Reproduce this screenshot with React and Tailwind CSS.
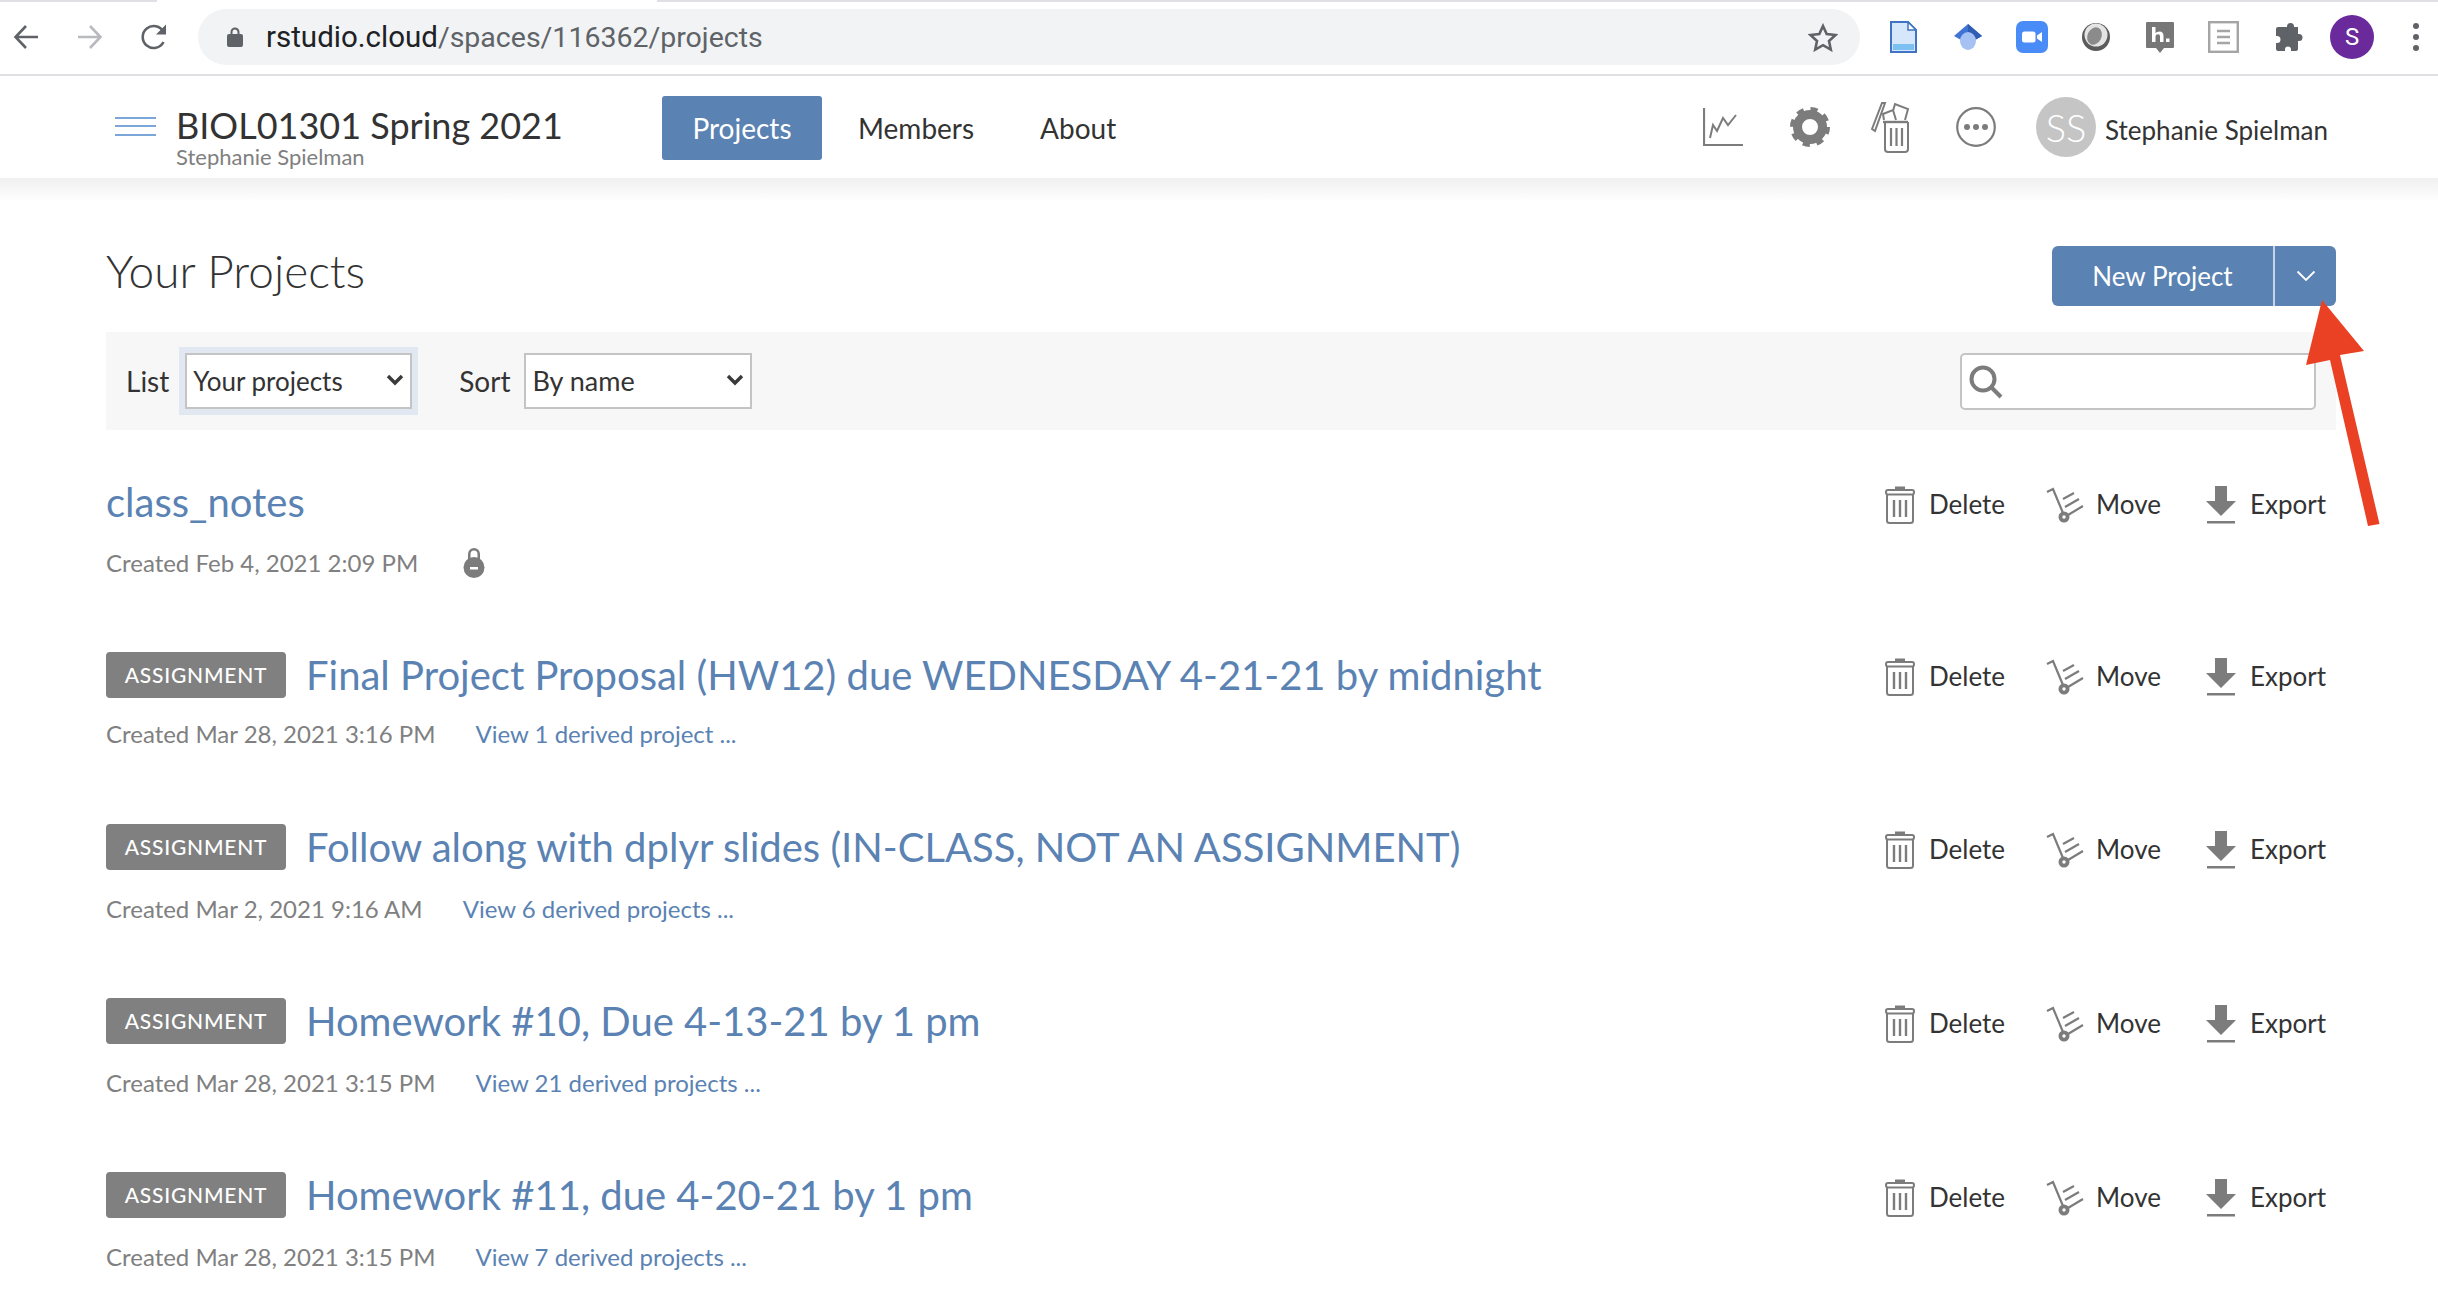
import { Fragment } from "react";

const rows = [
  { title: "class_notes", created: "Created Feb 4, 2021 2:09 PM", locked: true, height: "h-[173px]", actions: "mt-[5px]", meta: "mt-0" },
  { title: "Final Project Proposal (HW12) due WEDNESDAY 4-21-21 by midnight", created: "Created Mar 28, 2021 3:16 PM", derived: "View 1 derived project ...", height: "h-[172px]", actions: "mt-[3px]", meta: "-mt-[2px]" },
  { title: "Follow along with dplyr slides (IN-CLASS, NOT AN ASSIGNMENT)", created: "Created Mar 2, 2021 9:16 AM", derived: "View 6 derived projects ...", height: "h-[174px]", actions: "mt-[5px]", meta: "mt-[1px]" },
  { title: "Homework #10, Due 4-13-21 by 1 pm", created: "Created Mar 28, 2021 3:15 PM", derived: "View 21 derived projects ...", height: "h-[174px]", actions: "mt-[5px]", meta: "mt-[1px]" },
  { title: "Homework #11, due 4-20-21 by 1 pm", created: "Created Mar 28, 2021 3:15 PM", derived: "View 7 derived projects ...", height: "h-[174px]", actions: "mt-[5px]", meta: "mt-[1px]" },
];

const TrashIcon = () => (
  <svg width="30" height="38" viewBox="0 0 30 38" fill="none" stroke="#7c7c7c" strokeWidth="2">
    <path d="M11 3.5V1.5h8v2" fill="#7c7c7c" />
    <rect x="1" y="4" width="28" height="4.5" rx="2" />
    <path d="M2 8v26.5a2.5 2.5 0 0 0 2.5 2.5h21a2.5 2.5 0 0 0 2.5-2.5V8" />
    <path d="M9 14v17M15 14v17M21 14v17" strokeWidth="2.4" />
  </svg>
);

const CartIcon = () => (
  <svg width="38" height="38" viewBox="0 0 38 38" fill="none" stroke="#7c7c7c" strokeWidth="2.2">
    <path d="M1 6l6-3 10 24" />
    <circle cx="18" cy="31" r="5.5" fill="#7c7c7c" stroke="none" />
    <circle cx="18" cy="31" r="1.7" fill="#fff" stroke="none" />
    <path d="M22 29l15-9M19 21l14-8M17 13l11-6" />
  </svg>
);

const ExportIcon = () => (
  <svg width="30" height="38" viewBox="0 0 30 38" fill="#7c7c7c">
    <path d="M9 0h12v15h9L15 30 0 15h9z" />
    <rect x="1" y="35" width="28" height="2.5" />
  </svg>
);

const ChevronIcon = () => (
  <svg width="18" height="12" viewBox="0 0 18 12" fill="none" stroke="#3a3a3a" strokeWidth="3.4">
    <path d="M2 2l7 7 7-7" />
  </svg>
);

const Select = ({ value, className, textClass }) => (
  <div className={`relative h-[56px] ${className}`}>
    <select
      defaultValue={value}
      className={`w-full h-full appearance-none bg-white border-2 border-[#c4c4c4] pl-[6px] text-[#333] outline-none rounded-none ${textClass}`}
    >
      <option>{value}</option>
    </select>
    <div className="absolute right-[8px] top-[21px] pointer-events-none flex">
      <ChevronIcon />
    </div>
  </div>
);

const Action = ({ icon, label, className }) => (
  <div className={`flex items-center ${className}`}>
    {icon}
    <span className="text-[26px] text-[#333]">{label}</span>
  </div>
);

const BrowserBar = () => (
  <div className="h-[76px] bg-white relative border-b-2 border-[#dfe0e4] font-['Roboto',sans-serif]">
    <div className="absolute top-0 left-0 w-[157px] h-[2px] bg-[#dfe0e4]" />
    <div className="absolute top-0 left-[657px] right-0 h-[2px] bg-[#dfe0e4]" />
    <div className="h-full flex items-center">
      <svg className="ml-[13px]" width="26" height="26" viewBox="0 0 26 26" fill="none" stroke="#5f6368" strokeWidth="2.6">
        <path d="M25 13H3M13 2L2.5 13 13 24" />
      </svg>
      <svg className="ml-[38px]" width="26" height="26" viewBox="0 0 26 26" fill="none" stroke="#b8babd" strokeWidth="2.6">
        <path d="M1 13h22M13 2l10.5 11L13 24" />
      </svg>
      <svg className="ml-[37px]" width="28" height="28" viewBox="0 0 28 28" fill="none" stroke="#5f6368" strokeWidth="2.6">
        <path d="M23.5 19a11 11 0 1 1 0-10" />
        <path d="M26 1.5v10H16z" fill="#5f6368" stroke="none" />
      </svg>
      <div className="ml-[30px] w-[1662px] h-[56px] rounded-full bg-[#f1f3f4] flex items-center">
        <svg className="ml-[28px]" width="18" height="22" viewBox="0 0 18 22" fill="#5f6368">
          <path d="M4.5 8V6a4.5 4.5 0 0 1 9 0v2h-2V6a2.5 2.5 0 0 0-5 0v2z" />
          <rect x="1" y="8" width="16" height="13" rx="2" />
        </svg>
        <div className="ml-[22px] mt-[2px] text-[28.5px] leading-none text-[#5f6368] flex-1">
          <span className="text-[#202124] text-[29.5px]">rstudio.cloud</span>/spaces/116362/projects
        </div>
        <svg className="mr-[22px]" width="30" height="29" viewBox="0 0 30 29" fill="none" stroke="#5f6368" strokeWidth="2.6">
          <path d="M15 3l3.7 8 8.8 1-6.5 6 1.8 8.6L15 22.2l-7.8 4.4L9 18l-6.5-6 8.8-1z" />
        </svg>
      </div>
      <div className="ml-[30px] flex items-center">
        <svg width="27" height="32" viewBox="0 0 27 32">
          <path d="M1 1h17l8 8v22H1z" fill="#d6e6fb" stroke="#3f74c4" strokeWidth="2" />
          <path d="M18 1v8h8z" fill="#fff" stroke="#3f74c4" strokeWidth="1.5" />
          <rect x="3" y="23" width="21" height="6" fill="#7cc0f2" />
        </svg>
        <svg className="ml-[37px]" width="28" height="26" viewBox="0 0 28 26">
          <path d="M14 0l14 12-14 8L0 12z" fill="#3f74d4" />
          <path d="M14 0l14 12-14 8z" fill="#2f5db4" />
          <ellipse cx="14" cy="17" rx="8" ry="9" fill="#a6c2f4" />
        </svg>
        <svg className="ml-[34px]" width="32" height="32" viewBox="0 0 32 32">
          <rect width="32" height="32" rx="7" fill="#4a8cf7" />
          <rect x="6" y="10.5" width="13.5" height="11" rx="2.5" fill="#fff" />
          <path d="M21 14.5l5-3.5v10l-5-3.5z" fill="#fff" />
        </svg>
        <svg className="ml-[34px]" width="28" height="28" viewBox="0 0 28 28">
          <circle cx="14" cy="14" r="14" fill="#5b5b5b" />
          <circle cx="14" cy="12" r="11.500" fill="#e4e4e4" />
          <ellipse cx="12.500" cy="13" rx="7" ry="9" fill="#8b8b8b" transform="rotate(25 12.500 13)" />
        </svg>
        <svg className="ml-[36px]" width="28" height="31" viewBox="0 0 28 31">
          <path d="M1 0h26a1 1 0 0 1 1 1v24a1 1 0 0 1-1 1h-9l-4 5-4-5H1a1 1 0 0 1-1-1V1a1 1 0 0 1 1-1z" fill="#777" />
          <path d="M6 5h3.5v6q1.5-1.5 4-1.5 4 0 4 4.5v6H14v-6q0-1.8-2-1.8-2.5 0-2.5 2.4V20H6zM20 16.5h3.5V20H20z" fill="#fff" />
        </svg>
        <svg className="ml-[34px]" width="31" height="32" viewBox="0 0 31 32" fill="none">
          <rect x="1.2" y="1.2" width="28.6" height="29.6" fill="#fff" stroke="#a5a5a5" strokeWidth="2.4" />
          <path d="M9 10h13M9 16h13M9 22h13" stroke="#a5a5a5" strokeWidth="2.6" />
        </svg>
        <svg className="ml-[35px]" width="29" height="28" viewBox="0 0 29 28" fill="#5f6368">
          <path d="M10 4h3V3.5a3.5 3.5 0 0 1 7 0V4h4v7h1a3.5 3.5 0 0 1 0 7h-1v8a2 2 0 0 1-2 2h-5v-1.5a3 3 0 0 0-6 0V28H4a2 2 0 0 1-2-2v-6h1a3.5 3.5 0 0 0 0-7H2V6a2 2 0 0 1 2-2z" />
        </svg>
        <div className="ml-[27px] w-[44px] h-[44px] rounded-full bg-[#6b2a9b] text-white text-[24px] flex items-center justify-center">S</div>
        <div className="ml-[39px] flex flex-col gap-[5px]">
          <div className="w-[6px] h-[6px] rounded-full bg-[#5f6368]" />
          <div className="w-[6px] h-[6px] rounded-full bg-[#5f6368]" />
          <div className="w-[6px] h-[6px] rounded-full bg-[#5f6368]" />
        </div>
      </div>
    </div>
  </div>
);

const AppHeader = () => (
  <div className="h-[102px] bg-white flex items-center relative">
    <div className="ml-[115px] w-[41px] flex flex-col gap-[6.5px] mb-[2px]">
      <div className="h-[2px] bg-[#7ba6d8]" />
      <div className="h-[2px] bg-[#7ba6d8]" />
      <div className="h-[2px] bg-[#7ba6d8]" />
    </div>
    <div className="ml-[20px] w-[486px]">
      <div className="text-[36px] leading-[40px] text-[#333] mt-[20px]">BIOL01301 Spring 2021</div>
      <div className="text-[22px] leading-[24px] text-[#808080]">Stephanie Spielman</div>
    </div>
    <div className="w-[160px] h-[64px] rounded-[3px] bg-[#5a82b3] text-white text-[28px] flex items-center justify-center mt-[2px]">Projects</div>
    <div className="ml-[36px] text-[28px] text-[#333] mt-[1px]">Members</div>
    <div className="ml-[66px] text-[28px] text-[#333] mt-[1px]">About</div>
    <div className="ml-auto flex items-center">
      <svg width="40" height="38" viewBox="0 0 40 38" fill="none" stroke="#7c7c7c">
        <path d="M1 0v37h39" strokeWidth="2.2" />
        <path d="M7 30l3-13 4 6 6-13 5 7 8-10" strokeWidth="2" />
      </svg>
      <svg className="ml-[47px]" width="40" height="40" viewBox="0 0 40 40" fill="none" stroke="#7c7c7c">
        <circle cx="20" cy="20" r="12.5" strokeWidth="9" />
        <circle cx="20" cy="20" r="17.5" strokeWidth="5" strokeDasharray="7 6.74" />
      </svg>
      <svg className="ml-[41px]" width="39" height="51" viewBox="0 0 39 51" fill="none" stroke="#7c7c7c" strokeWidth="2">
        <path d="M1 27L11 1h3L4 29z" />
        <path d="M13 18l-1-6 10-4 3 10M22 9l2-7 13 5-3 11" />
        <path d="M12 20h25" strokeWidth="2.4" />
        <path d="M14 20v27a3 3 0 0 0 3 3h17a3 3 0 0 0 3-3V20" />
        <path d="M20 26v18M25.500 26v18M31 26v18" strokeWidth="2.2" />
      </svg>
      <svg className="ml-[46px]" width="40" height="40" viewBox="0 0 40 40" fill="#7c7c7c">
        <circle cx="20" cy="20" r="18.8" fill="none" stroke="#7c7c7c" strokeWidth="2.2" />
        <circle cx="11" cy="20" r="3" />
        <circle cx="20" cy="20" r="3" />
        <circle cx="29" cy="20" r="3" />
      </svg>
      <div className="ml-[40px] w-[60px] h-[60px] rounded-full bg-[#c5c5c5] text-white text-[38px] font-light flex items-center justify-center">SS</div>
      <div className="ml-[9px] mr-[110px] text-[26px] text-[#333] mt-[6px]">Stephanie Spielman</div>
    </div>
  </div>
);

const ProjectRow = ({ row }) => (
  <div className={row.height}>
    <div className="h-[60px] flex items-center">
      {!row.locked && (
        <div className="w-[180px] h-[46px] mr-[20px] mb-[1px] rounded-[4px] bg-[#808080] text-white text-[21px] font-medium tracking-[0.8px] flex items-center justify-center">ASSIGNMENT</div>
      )}
      <div className="text-[40px] text-[#5a82b3] whitespace-nowrap">{row.title}</div>
      <div className={`ml-auto flex items-center pr-[10px] ${row.actions}`}>
        <Action icon={<TrashIcon />} label="Delete" className="gap-[14px]" />
        <Action icon={<CartIcon />} label="Move" className="gap-[12px] ml-[41px]" />
        <Action icon={<ExportIcon />} label="Export" className="gap-[14px] ml-[45px]" />
      </div>
    </div>
    <div className={`h-[62px] flex items-center text-[24px] text-[#808080] ${row.meta}`}>
      <span>{row.created}</span>
      {row.locked && (
        <svg className="ml-[45px]" width="22" height="32" viewBox="0 0 22 32" fill="#7c7c7c">
          <path d="M5 14V7a6 6 0 0 1 12 0v7h-2.500V7a3.500 3.500 0 0 0-7 0v7z" />
          <circle cx="11" cy="20.500" r="10.500" />
          <rect x="7" y="20" width="8" height="2.500" fill="#fff" />
        </svg>
      )}
      {row.derived && <span className="ml-[40px] text-[#5a82b3]">{row.derived}</span>}
    </div>
  </div>
);

export default function App() {
  return (
    <div className="relative w-[2438px] h-[1304px] overflow-hidden bg-white font-['Lato',sans-serif]">
      <BrowserBar />
      <AppHeader />
      <div className="h-[24px] -mb-[24px] bg-gradient-to-b from-[#f0f0f0] to-white" />
      <div className="pl-[106px] pr-[102px] pt-[68px]">
        <div className="flex justify-between items-start h-[60px]">
          <div className="text-[46px] leading-[56px] font-light text-[#333] -mt-[3px]">Your Projects</div>
          <div className="flex h-[60px] rounded-[6px] overflow-hidden bg-[#5a82b3] text-white">
            <div className="w-[221px] text-[26px] flex items-center justify-center">New Project</div>
            <div className="w-[63px] border-l-2 border-[#c5d3e5] flex items-center justify-center">
              <svg width="20" height="12" viewBox="0 0 20 12" fill="none" stroke="#fff" strokeWidth="1.8">
                <path d="M1.500 1.500L10 10l8.500-8.500" />
              </svg>
            </div>
          </div>
        </div>
        <div className="mt-[26px] h-[98px] bg-[#f7f7f7] flex items-center text-[#333] text-[28px]">
          <span className="ml-[20px]">List</span>
          <div className="ml-[10px] p-[6px] bg-[#e2e8f2]">
            <Select value="Your projects" className="w-[227px]" textClass="text-[26px]" />
          </div>
          <span className="ml-[41px]">Sort</span>
          <Select value="By name" className="ml-[14px] w-[228px]" textClass="text-[27px]" />
          <div className="ml-auto mr-[20px] relative w-[356px] h-[57px]">
            <input className="w-full h-full bg-white border-2 border-[#c4c4c4] rounded-[5px] outline-none" />
            <svg className="absolute left-[9px] top-[12px]" width="34" height="34" viewBox="0 0 34 34" fill="none" stroke="#7c7c7c" strokeWidth="4">
              <circle cx="14" cy="14" r="11.500" />
              <path d="M22 22l10 10" />
            </svg>
          </div>
        </div>
        <div className="pt-[42px]">
          {rows.map((row) => (
            <Fragment key={row.title}>
              <ProjectRow row={row} />
            </Fragment>
          ))}
        </div>
      </div>
      <svg className="absolute left-[2300px] top-[296px]" width="90" height="235" viewBox="0 0 90 235" fill="#ea4125">
        <path d="M22 4L64 55 40 59 79.500 228 68 230 30 64 6 69z" />
      </svg>
    </div>
  );
}
